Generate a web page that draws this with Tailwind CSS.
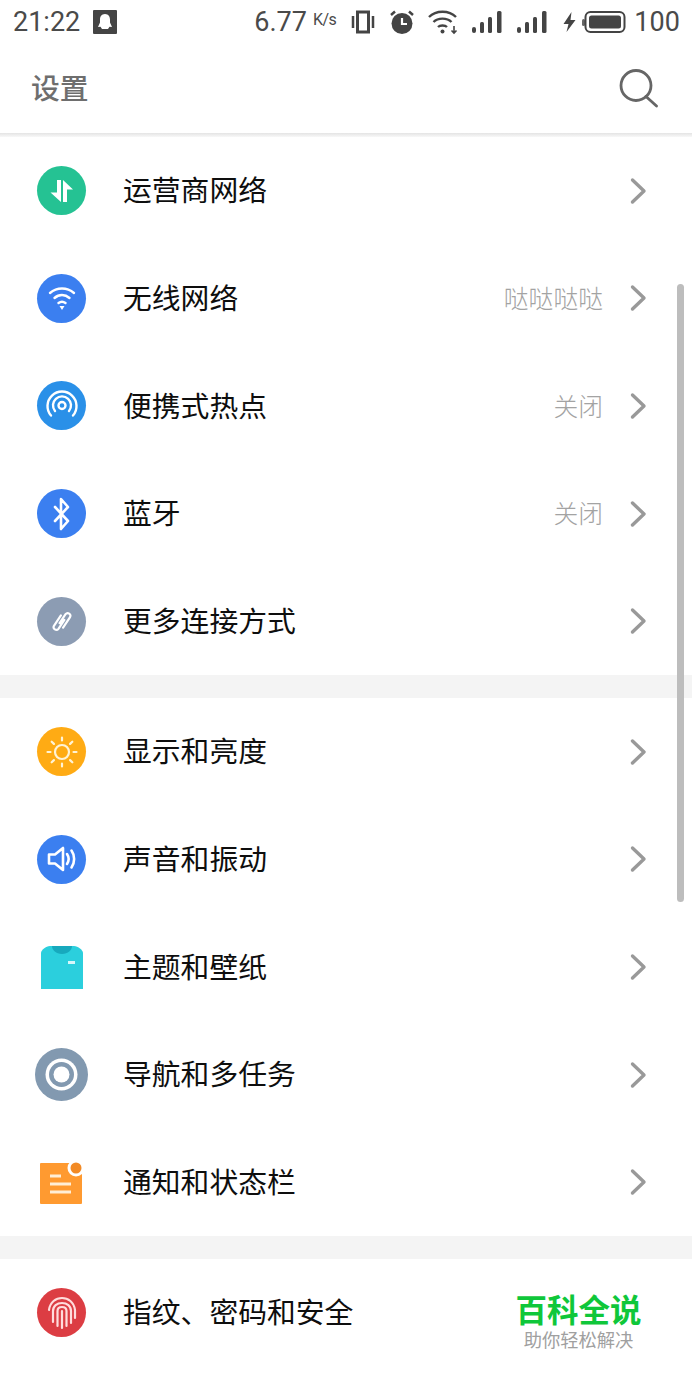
<!DOCTYPE html>
<html lang="zh">
<head>
<meta charset="utf-8">
<script src="https://cdn.jsdelivr.net/npm/@tailwindcss/browser@4"></script>
</head>
<body class="bg-white">
<div class="relative w-[692px] h-[1384px] overflow-hidden bg-white font-['Noto_Sans_CJK_SC','Noto_Sans_CJK_JP',sans-serif] text-[#0e0e0e]">

  <!-- status bar -->
  <div class="h-[44px] flex items-center pl-[13px] text-[#4a4a4a] font-['Roboto',sans-serif] text-[27px] leading-none">
    <span>21:22</span>
    <svg class="ml-[13px] w-[24px] h-[24px]" viewBox="0 0 24 24"><rect width="24" height="24" rx="1" fill="#444"/><path d="M12 4c-3.500 0-5 2.800-5 5.500v3L5 17l2.500-.3L9 19h6l1.500-2.300L19 17l-2-4.500v-3C17 6.800 15.500 4 12 4z" fill="#fff"/></svg>
    <span class="ml-[137px]">6.77</span>
    <span class="ml-[6px] mb-[5px] text-[16px] tracking-[-.5px]">K/s</span>
    <svg class="ml-[15px] w-[24px] h-[24px]" viewBox="0 0 24 24" fill="none" stroke="#444"><rect x="6.500" y="2" width="11" height="20" stroke-width="3"/><path d="M2 6v12M22 6v12" stroke-width="2.500"/></svg>
    <svg class="ml-[14px] w-[26px] h-[26px]" viewBox="0 0 26 26"><circle cx="13" cy="14.500" r="10.500" fill="#444"/><path d="M13 9v6h5" stroke="#fff" stroke-width="2.200" fill="none"/><path d="M2 6l4-3.500M24 6l-4-3.500" stroke="#444" stroke-width="2.500"/></svg>
    <svg class="ml-[13px] w-[30px] h-[26px]" viewBox="0 0 30 26" fill="none" stroke="#444" stroke-width="2.400"><path d="M1 8c7-7 20-7 27 0M5.500 13c4.500-4.500 13.500-4.500 18 0M10 18c2-2 7-2 9 0"/><circle cx="14.500" cy="22.500" r="2" fill="#444" stroke="none"/><path d="M26 17v7M23.500 21.500l2.500 2.500 2.500-2.500" stroke-width="1.600"/></svg>
    <svg class="ml-[14px] w-[30px] h-[24px]" viewBox="0 0 30 24" fill="#444"><rect x="0" y="17" width="4" height="6" rx="2"/><rect x="8" y="12" width="4" height="11" rx="1.500"/><rect x="16" y="7" width="4" height="16" rx="1.500"/><rect x="25" y="1" width="4.500" height="22" rx="1.500"/></svg>
    <svg class="ml-[15px] w-[30px] h-[24px]" viewBox="0 0 30 24" fill="#444"><rect x="0" y="17" width="4" height="6" rx="2"/><rect x="8" y="12" width="4" height="11" rx="1.500"/><rect x="16" y="7" width="4" height="16" rx="1.500"/><rect x="25" y="1" width="4.500" height="22" rx="1.500"/></svg>
    <svg class="ml-[16px] w-[13px] h-[20px]" viewBox="0 0 12 20" fill="#444"><path d="M8 0L0 12h5l-2 8 9-12H7z"/></svg>
    <svg class="ml-[6px] w-[44px] h-[24px]" viewBox="0 0 44 24"><rect x="0" y="9" width="3" height="7" rx="1.500" fill="#666"/><rect x="3.500" y="2" width="39" height="20" rx="5" fill="none" stroke="#444" stroke-width="2"/><rect x="7" y="5.500" width="32" height="13" rx="2.500" fill="#444"/></svg>
    <span class="ml-[8px]">100</span>
  </div>

  <!-- title bar -->
  <div class="h-[89px] flex items-center justify-between pl-[31px] pr-[34px] pb-[2px]">
    <span class="text-[#6e6e6e] text-[28.800px] leading-none font-medium">设置</span>
    <svg class="w-[40px] h-[40px]" viewBox="0 0 40 40" fill="none" stroke="#666" stroke-width="2.800"><circle cx="18" cy="17.500" r="15"/><path d="M28 28.500l10.500 9.500" stroke-linecap="round"/></svg>
  </div>
  <div class="h-[4px] bg-gradient-to-b from-[#e4e4e4] to-[#f8f8f8]"></div>

  <!-- section 1 -->
  <div class="flex flex-col">
    <div class="h-[107.600px] flex items-center pl-[37px] pr-[45px]">
      <div class="w-[49px] h-[49px] rounded-full bg-[#25c293] flex items-center justify-center">
        <svg class="w-[24px] h-[24px]" viewBox="0 0 24 24" fill="#fff"><path d="M7 1h4v22L.5 13.500H7zM13 1l10 9.500h-6V23h-4z"/></svg>
      </div>
      <span class="ml-[37px] mb-[2px] text-[28.800px] leading-none flex-1">运营商网络</span>
      <svg class="w-[17px] h-[28px]" viewBox="0 0 17 28" fill="none" stroke="#999" stroke-width="3.400" stroke-linecap="round" stroke-linejoin="round"><path d="M2.500 3L14 14 2.500 25"/></svg>
    </div>
    <div class="h-[107.600px] flex items-center pl-[37px] pr-[45px]">
      <div class="w-[49px] h-[49px] rounded-full bg-[#3b7ff0] flex items-center justify-center">
        <svg class="w-[28px] h-[26px]" viewBox="0 0 28 26" fill="none" stroke="#fff" stroke-width="2.400" stroke-linecap="round"><path d="M2 8c7-6 17-6 24 0M6.500 13c4.500-4 10.500-4 15 0M10.500 18c2-1.500 5-1.500 7 0"/><path d="M11.500 21h5L14 25z" fill="#fff" stroke="none"/></svg>
      </div>
      <span class="ml-[37px] mb-[2px] text-[28.800px] leading-none flex-1">无线网络</span>
      <span class="mr-[27px] mb-[2px] text-[24.800px] leading-none text-[#a3a3a3] font-light">哒哒哒哒</span>
      <svg class="w-[17px] h-[28px]" viewBox="0 0 17 28" fill="none" stroke="#999" stroke-width="3.400" stroke-linecap="round" stroke-linejoin="round"><path d="M2.500 3L14 14 2.500 25"/></svg>
    </div>
    <div class="h-[107.600px] flex items-center pl-[37px] pr-[45px]">
      <div class="w-[49px] h-[49px] rounded-full bg-[#2a90e8] flex items-center justify-center">
        <svg class="w-[32px] h-[32px]" viewBox="0 0 32 32" fill="none" stroke="#fff" stroke-width="2.400" stroke-linecap="round"><path d="M5 25.500a14.500 14.500 0 1 1 22 0M9 21a9 9 0 1 1 14 0"/><circle cx="16" cy="15.500" r="3.500"/></svg>
      </div>
      <span class="ml-[37px] mb-[2px] text-[28.800px] leading-none flex-1">便携式热点</span>
      <span class="mr-[27px] mb-[2px] text-[24.800px] leading-none text-[#a3a3a3] font-light">关闭</span>
      <svg class="w-[17px] h-[28px]" viewBox="0 0 17 28" fill="none" stroke="#999" stroke-width="3.400" stroke-linecap="round" stroke-linejoin="round"><path d="M2.500 3L14 14 2.500 25"/></svg>
    </div>
    <div class="h-[107.600px] flex items-center pl-[37px] pr-[45px]">
      <div class="w-[49px] h-[49px] rounded-full bg-[#3b7ff0] flex items-center justify-center">
        <svg class="w-[20px] h-[34px]" viewBox="0 0 20 34" fill="none" stroke="#fff" stroke-width="2.600" stroke-linejoin="round" stroke-linecap="round"><path d="M3 10l13 14-7 8V2l7 8L3 24"/></svg>
      </div>
      <span class="ml-[37px] mb-[2px] text-[28.800px] leading-none flex-1">蓝牙</span>
      <span class="mr-[27px] mb-[2px] text-[24.800px] leading-none text-[#a3a3a3] font-light">关闭</span>
      <svg class="w-[17px] h-[28px]" viewBox="0 0 17 28" fill="none" stroke="#999" stroke-width="3.400" stroke-linecap="round" stroke-linejoin="round"><path d="M2.500 3L14 14 2.500 25"/></svg>
    </div>
    <div class="h-[107.600px] flex items-center pl-[37px] pr-[45px]">
      <div class="w-[49px] h-[49px] rounded-full bg-[#8c9cb3] flex items-center justify-center">
        <svg class="w-[20px] h-[27px]" viewBox="0 0 22 30" fill="none" stroke="#fff" stroke-width="2.400" stroke-linecap="round"><path d="M8.350 16.830L14.950 6.870A3 3 0 0 1 19.930 10.170L12.230 21.790M13.650 13.170L7.050 23.130A3 3 0 0 1 2.070 19.830L9.770 8.210"/></svg>
      </div>
      <span class="ml-[37px] mb-[2px] text-[28.800px] leading-none flex-1">更多连接方式</span>
      <svg class="w-[17px] h-[28px]" viewBox="0 0 17 28" fill="none" stroke="#999" stroke-width="3.400" stroke-linecap="round" stroke-linejoin="round"><path d="M2.500 3L14 14 2.500 25"/></svg>
    </div>
  </div>

  <div class="h-[23px] bg-[#f4f4f4]"></div>

  <!-- section 2 -->
  <div class="flex flex-col">
    <div class="h-[107.600px] flex items-center pl-[37px] pr-[45px]">
      <div class="w-[49px] h-[49px] rounded-full bg-[#ffab14] flex items-center justify-center">
        <svg class="w-[32px] h-[32px]" viewBox="0 0 32 32" fill="none" stroke="#fff3d6" stroke-width="2.200" stroke-linecap="round"><circle cx="16" cy="16" r="7"/><path d="M16 1.500v3M16 27.500v3M1.500 16h3M27.500 16h3M5.700 5.700l2.200 2.200M24.100 24.100l2.200 2.200M5.700 26.300l2.200-2.200M24.100 7.900l2.200-2.200"/></svg>
      </div>
      <span class="ml-[37px] mb-[2px] text-[28.800px] leading-none flex-1">显示和亮度</span>
      <svg class="w-[17px] h-[28px]" viewBox="0 0 17 28" fill="none" stroke="#999" stroke-width="3.400" stroke-linecap="round" stroke-linejoin="round"><path d="M2.500 3L14 14 2.500 25"/></svg>
    </div>
    <div class="h-[107.600px] flex items-center pl-[37px] pr-[45px]">
      <div class="w-[49px] h-[49px] rounded-full bg-[#3b7ff0] flex items-center justify-center">
        <svg class="w-[30px] h-[28px]" viewBox="0 0 30 28" fill="none" stroke="#fff" stroke-width="2.600" stroke-linejoin="round" stroke-linecap="round"><path d="M2 9.500h6L16 3v22l-8-6.500H2zM20 9c2 3 2 7 0 10M24.500 5.500c3.500 5 3.500 12 0 17"/></svg>
      </div>
      <span class="ml-[37px] mb-[2px] text-[28.800px] leading-none flex-1">声音和振动</span>
      <svg class="w-[17px] h-[28px]" viewBox="0 0 17 28" fill="none" stroke="#999" stroke-width="3.400" stroke-linecap="round" stroke-linejoin="round"><path d="M2.500 3L14 14 2.500 25"/></svg>
    </div>
    <div class="h-[107.600px] flex items-center pl-[37px] pr-[45px]">
      <div class="w-[49px] h-[49px] flex items-center justify-center">
        <svg class="w-[42px] h-[44px]" viewBox="0 0 42 44"><path d="M0 8c0-3 5-7 9-7h24c4 0 9 4 9 7v36H0z" fill="#2bcfdd"/><path d="M11 1h20c0 4-4 8-10 8S11 5 11 1z" fill="#17a9bd"/><rect x="27" y="16" width="7" height="3" fill="#d6f7fa"/></svg>
      </div>
      <span class="ml-[37px] mb-[2px] text-[28.800px] leading-none flex-1">主题和壁纸</span>
      <svg class="w-[17px] h-[28px]" viewBox="0 0 17 28" fill="none" stroke="#999" stroke-width="3.400" stroke-linecap="round" stroke-linejoin="round"><path d="M2.500 3L14 14 2.500 25"/></svg>
    </div>
    <div class="h-[107.600px] flex items-center pl-[35px] pr-[45px]">
      <svg class="w-[53px] h-[53px]" viewBox="0 0 53 53"><circle cx="26.500" cy="26.500" r="26.500" fill="#8299b0"/><circle cx="26.500" cy="26.500" r="16" fill="#fff"/><circle cx="26.500" cy="26.500" r="12.500" fill="#8299b0"/><circle cx="26.500" cy="26.500" r="8" fill="#fff"/></svg>
      <span class="ml-[35px] mb-[2px] text-[28.800px] leading-none flex-1">导航和多任务</span>
      <svg class="w-[17px] h-[28px]" viewBox="0 0 17 28" fill="none" stroke="#999" stroke-width="3.400" stroke-linecap="round" stroke-linejoin="round"><path d="M2.500 3L14 14 2.500 25"/></svg>
    </div>
    <div class="h-[107.600px] flex items-center pl-[37px] pr-[45px]">
      <div class="w-[49px] h-[49px] flex items-center justify-center">
        <svg class="w-[45px] h-[44px]" viewBox="0 0 45 44"><rect x="1" y="3" width="42" height="41" rx="1" fill="#ff9a30"/><circle cx="37" cy="8" r="8.500" fill="#fff"/><circle cx="37" cy="8" r="5.500" fill="#f28a25"/><path d="M11 16h11M11 24h21M11 32h21" stroke="#ffeed6" stroke-width="3"/></svg>
      </div>
      <span class="ml-[37px] mb-[2px] text-[28.800px] leading-none flex-1">通知和状态栏</span>
      <svg class="w-[17px] h-[28px]" viewBox="0 0 17 28" fill="none" stroke="#999" stroke-width="3.400" stroke-linecap="round" stroke-linejoin="round"><path d="M2.500 3L14 14 2.500 25"/></svg>
    </div>
  </div>

  <div class="h-[23px] bg-[#f4f4f4]"></div>

  <!-- section 3 -->
  <div class="h-[107.600px] flex items-center pl-[37px] pr-[45px]">
    <div class="w-[49px] h-[49px] rounded-full bg-[#dc3d43] flex items-center justify-center">
      <svg class="w-[30px] h-[34px]" viewBox="0 0 30 34" fill="none" stroke="#ffdcdc" stroke-width="2.200" stroke-linecap="round"><path d="M2 14C3 6 9 2 15 2s12 4 13 12v8M6 26V15c0-5 4-8 9-8s9 3 9 8v12M10.500 30V15c0-3 2-4 4.500-4s4.500 1 4.500 4v15M15 15v17"/></svg>
    </div>
    <span class="ml-[37px] mb-[2px] text-[28.800px] leading-none flex-1">指纹、密码和安全</span>
  </div>

  <!-- scrollbar -->
  <div class="absolute left-[677px] top-[284px] w-[7px] h-[618px] rounded-full bg-[#bdbdbd]"></div>

  <!-- watermark -->
  <div class="absolute left-[515px] top-[1289px] w-[127px] flex flex-col items-center">
    <span class="text-[31.500px] leading-[38px] font-bold text-[#0fc73a] whitespace-nowrap">百科全说</span>
    <span class="text-[18.300px] leading-[24px] text-[#a0a0a0] whitespace-nowrap">助你轻松解决</span>
  </div>
</div>
</body>
</html>
